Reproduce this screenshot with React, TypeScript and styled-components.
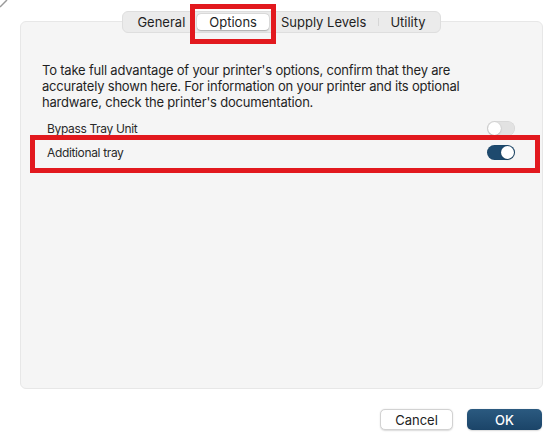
import React from "react";
import styled, { createGlobalStyle } from "styled-components";

const Global = createGlobalStyle`
  html, body { margin: 0; padding: 0; background: #ffffff; }
  body { font-family: Inter, "Liberation Sans", "Noto Sans", sans-serif; -webkit-font-smoothing: antialiased; }
  * { box-sizing: border-box; }
`;

const Page = styled.div`
  position: relative;
  width: 550px;
  height: 443px;
  padding: 11px 7px 0 20px;
  display: flex;
  flex-direction: column;
`;

const CornerMark = styled.svg`
  position: absolute;
  left: 0;
  top: 0;
`;

const TabBar = styled.div`
  position: relative;
  z-index: 1;
  align-self: center;
  display: flex;
  align-items: stretch;
  height: 22px;
  padding: 2px;
  margin-bottom: -12px;
  background: #ebebeb;
  border: 1px solid #dedede;
  border-radius: 6px;
`;

const Tab = styled.div<{ $active?: boolean; $sep?: boolean }>`
  position: relative;
  display: flex;
  align-items: center;
  padding: 0 12px;
  font-size: 13px;
  color: #1f1f1f;
  border-radius: 4px;
  background: ${(p) => (p.$active ? "#ffffff" : "transparent")};
  box-shadow: ${(p) =>
    p.$active ? "0 0.5px 1.5px rgba(0,0,0,0.25), 0 0 0 0.5px rgba(0,0,0,0.06)" : "none"};
  &::before {
    content: "";
    display: ${(p) => (p.$sep ? "block" : "none")};
    position: absolute;
    left: 0;
    top: 4px;
    bottom: 4px;
    width: 1px;
    background: #d6d6d6;
  }
`;

const Highlight = styled.div<{ $t: number; $r: number; $b: number; $l: number }>`
  position: absolute;
  top: ${(p) => p.$t}px;
  right: ${(p) => p.$r}px;
  bottom: ${(p) => p.$b}px;
  left: ${(p) => p.$l}px;
  border: 5px solid #e2191e;
  pointer-events: none;
`;

const Panel = styled.div`
  height: 368px;
  background: #f5f5f5;
  border: 1px solid #e7e7e7;
  border-radius: 6px;
  padding: 40px 0 0 0;
  display: flex;
  flex-direction: column;
`;

const Intro = styled.p`
  margin: 0 0 6px 21px;
  max-width: 440px;
  font-size: 13px;
  line-height: 16px;
  letter-spacing: -0.2px;
  color: #1f1f1f;
`;

const Row = styled.div`
  position: relative;
  height: 24px;
  display: flex;
  align-items: center;
  justify-content: space-between;
  padding: 0 27px 0 26px;
`;

const Label = styled.span`
  font-size: 12px;
  letter-spacing: -0.35px;
  color: #2a2a2a;
`;

const Track = styled.div<{ $on?: boolean }>`
  position: relative;
  width: 28px;
  height: 15px;
  border-radius: 8px;
  background: ${(p) => (p.$on ? "#1e4a6e" : "#e2e2e2")};
  box-shadow: inset 0 0 0 0.5px rgba(0, 0, 0, 0.08);
`;

const Knob = styled.div<{ $on?: boolean }>`
  position: absolute;
  top: 1px;
  left: ${(p) => (p.$on ? "14px" : "1px")};
  width: 13px;
  height: 13px;
  border-radius: 50%;
  background: #ffffff;
  box-shadow: 0 0.5px 1.5px rgba(0, 0, 0, 0.3);
`;

const Footer = styled.div`
  margin-top: 20px;
  display: flex;
  justify-content: flex-end;
  gap: 14px;
  padding-right: 1px;
`;

const Button = styled.button<{ $primary?: boolean }>`
  width: ${(p) => (p.$primary ? "75px" : "73px")};
  height: 21px;
  border-radius: 5px;
  font-family: Inter, "Liberation Sans", sans-serif;
  font-size: 13px;
  font-weight: ${(p) => (p.$primary ? 500 : 400)};
  color: ${(p) => (p.$primary ? "#ffffff" : "#222")};
  background: ${(p) =>
    p.$primary ? "linear-gradient(#2b5a80, #1b4468)" : "#ffffff"};
  border: ${(p) => (p.$primary ? "none" : "0.5px solid #d2d2d2")};
  box-shadow: 0 0.5px 1.5px rgba(0, 0, 0, 0.15);
  padding: 0;
`;

const Toggle = ({ on }: { on?: boolean }) => (
  <Track $on={on}>
    <Knob $on={on} />
  </Track>
);

export default function App() {
  return (
    <>
      <Global />
      <Page>
        <CornerMark width="10" height="10" viewBox="0 0 10 10">
          <path d="M0 7 L7 0" stroke="#9a9a9a" strokeWidth="1.5" />
        </CornerMark>
        <TabBar>
          <Tab>General</Tab>
          <Tab $active>
            Options
            <Highlight $t={-10} $r={-7} $b={-14} $l={-7} />
          </Tab>
          <Tab>Supply Levels</Tab>
          <Tab $sep>Utility</Tab>
        </TabBar>
        <Panel>
          <Intro>
            To take full advantage of your printer's options, confirm that they are
            accurately shown here. For information on your printer and its optional
            hardware, check the printer's documentation.
          </Intro>
          <Row>
            <Label>Bypass Tray Unit</Label>
            <Toggle />
          </Row>
          <Row>
            <Label>Additional tray</Label>
            <Toggle on />
            <Highlight $t={-5} $r={2} $b={-9} $l={9} />
          </Row>
        </Panel>
        <Footer>
          <Button>Cancel</Button>
          <Button $primary>OK</Button>
        </Footer>
      </Page>
    </>
  );
}
